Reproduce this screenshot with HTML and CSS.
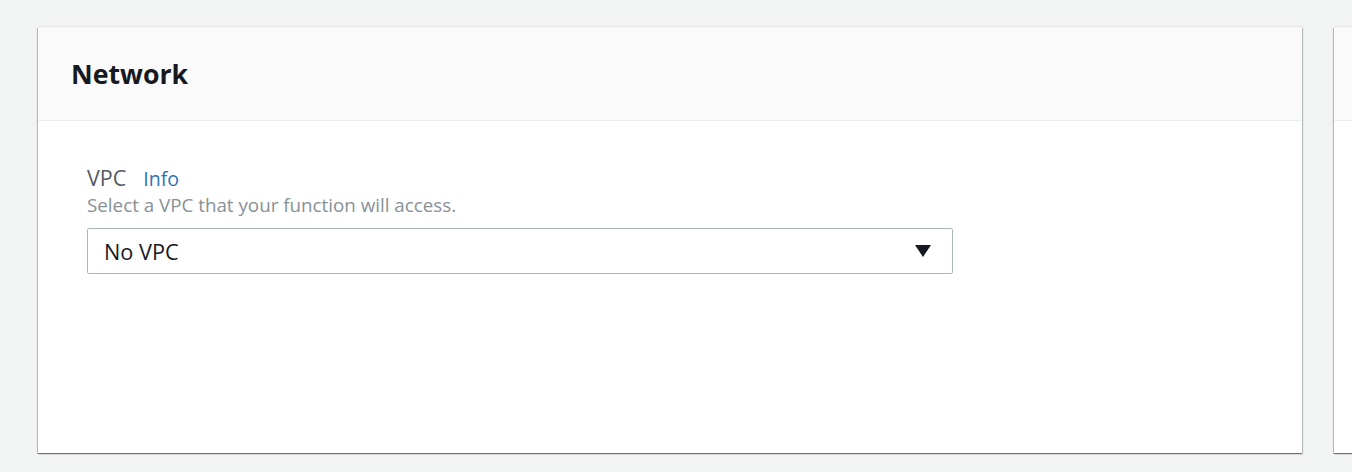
FILE: index.html
```html
<!DOCTYPE html>
<html>
<head>
<meta charset="utf-8">
<link rel="stylesheet" href="styles.css">
</head>
<body>
<div class="page">
  <section class="card">
    <header class="card-header"><h2>Network</h2></header>
    <div class="card-body">
      <div class="field">
        <div class="label-row"><span class="label">VPC</span><a class="info">Info</a></div>
        <div class="desc">Select a VPC that your function will access.</div>
        <div class="select">
          <span>No VPC</span>
          <svg class="caret" width="16" height="12" viewBox="0 0 16 12"><path d="M0 0H16L8 12Z" fill="#16191f"/></svg>
        </div>
      </div>
    </div>
  </section>
  <section class="card card-next">
    <header class="card-header"></header>
  </section>
</div>
</body>
</html>
```
FILE: styles.css
```css
html, body { margin: 0; padding: 0; }
body {
  background: #f2f3f3;
  font-family: "Open Sans", "Noto Sans", sans-serif;
  color: #16191f;
  width: 1352px;
  height: 472px;
  overflow: hidden;
}
.page {
  display: flex;
  gap: 32px;
  padding: 27px 0 0 38px;
}
.card {
  flex: 0 0 1264px;
  height: 426px;
  background: #fff;
  box-shadow: 0 1px 1px 0 rgba(0,28,36,.35), 1px 1px 1px 0 rgba(0,28,36,.2), -1px 1px 1px 0 rgba(0,28,36,.2), 0 -1px 1px 0 rgba(0,28,36,.06);
  display: flex;
  flex-direction: column;
}
.card-header {
  height: 94px;
  box-sizing: border-box;
  background: #fafafa;
  border-bottom: 1px solid #eaeded;
  padding: 0 33px;
  display: flex;
  align-items: center;
}
.card-header h2 {
  margin: 0;
  font-size: 26.7px;
  font-weight: 700;
  letter-spacing: 0;
}
.card-body {
  padding: 43px 49px;
}
.label-row {
  display: flex;
  align-items: baseline;
  gap: 17px;
  line-height: 28px;
}
.label { font-size: 21.5px; color: #545b64; }
.info { font-size: 19.5px; color: #2e73b8; }
.desc {
  font-size: 18.8px;
  color: #879196;
  line-height: 24px;
}
.select {
  margin-top: 11px;
  width: 866px;
  height: 46px;
  box-sizing: border-box;
  border: 1px solid #aab7b8;
  border-radius: 2px;
  display: flex;
  align-items: center;
  justify-content: space-between;
  padding: 0 21px 0 16px;
  font-size: 21.7px;
}
.caret { display: block; }
```
